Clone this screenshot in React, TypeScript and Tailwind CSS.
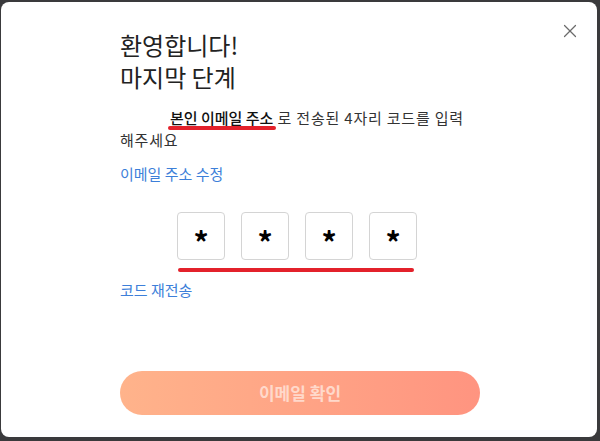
import { X } from "lucide-react";

const font = { fontFamily: '"Noto Sans CJK KR", "Noto Sans", sans-serif' };

export default function App() {
  return (
    <div className="w-[600px] h-[441px] bg-[#3a3a3c] pt-[2px] pl-[1px] pr-[3px] pb-[4px]" style={font}>
      <div className="relative h-full rounded-lg bg-white">
        {/* close */}
        <button className="absolute right-[16px] top-[18px] text-[#6b6b6b]" aria-label="close">
          <X size={22} strokeWidth={1.3} />
        </button>

        <div className="ml-[119px] w-[361px] pt-[27px]">
          <h1 className="text-[24px] leading-[32px] font-normal text-[#222]">
            <div>환영합니다!</div>
            <div>마지막 단계</div>
          </h1>

          <p className="mt-[14px] text-[15px] leading-[22px] tracking-[0.8px] text-[#333]">
            <span className="inline-block w-[50px]" />
            <span className="relative font-medium tracking-normal text-[#111]">
              본인 이메일 주소
              <span className="absolute -left-[2px] -right-[3px] top-[19px] h-[4px] rounded-full bg-[#e3212b]" />
            </span>{" "}
            로 전송된 4자리 코드를 입력
            <br />
            해주세요
          </p>

          <a className="mt-[12px] block text-[15px] leading-[22px] text-[#3d7fd9]">이메일 주소 수정</a>

          <div className="relative mt-[27px] flex gap-4 pl-[57px]">
            {[0, 1, 2, 3].map((i) => (
              <div
                key={i}
                className="flex h-12 w-12 items-center justify-center rounded-[4px] border border-[#d4d4d4] text-[30px] font-bold leading-none text-black"
              >
                <span className="mt-[10px]">*</span>
              </div>
            ))}
            <span className="absolute left-[58px] top-[56px] h-[4px] w-[236px] rounded-full bg-[#e3212b]" />
          </div>

          <a className="mt-[19px] block text-[15px] leading-[22px] text-[#3d7fd9]">코드 재전송</a>

          <button className="mt-[70px] flex h-[44px] w-[360px] items-center justify-center rounded-full bg-gradient-to-r from-[#ffb38b] to-[#ff9480] text-[17px] font-bold text-[#ffd9cb]">
            이메일 확인
          </button>
        </div>
      </div>
    </div>
  );
}
